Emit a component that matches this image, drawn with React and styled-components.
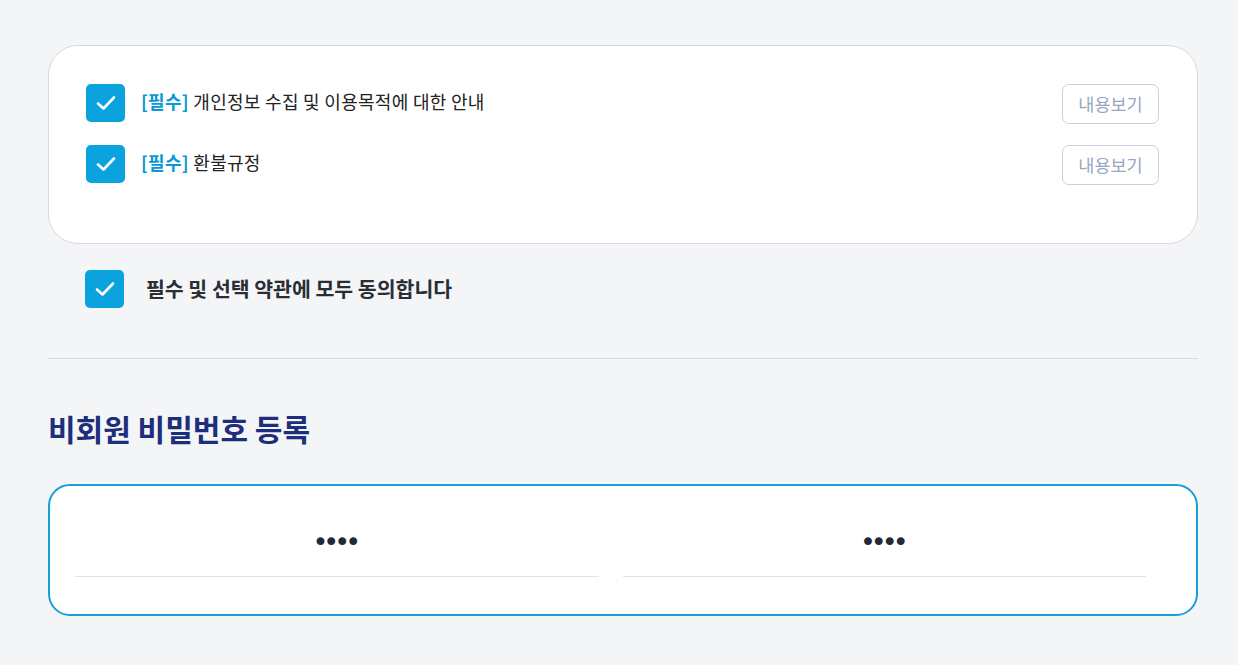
import React from "react";
import styled, { createGlobalStyle } from "styled-components";

const Global = createGlobalStyle`
  html, body { margin: 0; padding: 0; background: #f4f5f7; }
  body { font-family: "Noto Sans CJK KR", "Noto Sans", sans-serif; color: #222; }
`;

const Page = styled.div`
  width: 1150px;
  padding: 45px 40px 50px 48px;
`;

const TermsCard = styled.div`
  background: #fff;
  border: 1px solid #d6d9e6;
  border-radius: 30px;
  padding: 38px 38px 46px 37px;
  display: flex;
  flex-direction: column;
  gap: 23px;
  height: 199px;
  box-sizing: border-box;
`;

const TermRow = styled.div`
  display: flex;
  align-items: center;
  height: 38px;
`;

const Box = styled.span`
  width: 39px;
  height: 38px;
  border-radius: 5px;
  background: #0aa3de;
  display: flex;
  align-items: center;
  justify-content: center;
  flex-shrink: 0;
`;

const Label = styled.span`
  margin-left: ${(p) => p.$gap}px;
  font-size: ${(p) => p.$size}px;
  font-weight: ${(p) => p.$weight};
  color: ${(p) => p.$color};
  letter-spacing: ${(p) => p.$ls || 0}px;
  flex: 1;
  line-height: 1;
  position: relative;
  top: ${(p) => p.$shift || -1}px;
`;

const Req = styled.b`
  color: #0a98d6;
  font-weight: 700;
`;

const ViewButton = styled.button`
  align-self: flex-start;
  width: 97px;
  height: 40px;
  border: 1px solid #c9d0dd;
  border-radius: 7px;
  background: #fff;
  color: #98a6c0;
  font-family: "Noto Sans CJK KR", sans-serif;
  font-size: 17.5px;
  padding: 0 0 2px;
`;

const AgreeRow = styled.div`
  display: flex;
  align-items: center;
  height: 38px;
  margin: 26px 0 0 37px;
`;

const Divider = styled.hr`
  border: none;
  border-top: 1px solid #d8d9de;
  margin: 50px 0 0;
`;

const Heading = styled.h2`
  margin: 49px 0 0;
  font-size: 30px;
  font-weight: 700;
  color: #1c2e7c;
  line-height: 40px;
`;

const InputCard = styled.div`
  margin-top: 36px;
  background: #fff;
  border: 2px solid #17a0d8;
  border-radius: 22px;
  height: 132px;
  box-sizing: border-box;
  padding: 0 50px 0 25px;
  display: grid;
  grid-template-columns: 1fr 1fr;
  gap: 24px;
`;

const Field = styled.div`
  display: flex;
  flex-direction: column;
  align-items: center;
  border-bottom: 1px solid #e1e3e8;
  height: 91px;
  box-sizing: border-box;
  padding-top: 42px;
`;

const Dots = styled.span`
  font-size: 27px;
  line-height: 1;
  color: #222a35;
  letter-spacing: -5px;
  padding-right: 5px;
  font-family: "DejaVu Sans", sans-serif;
`;

const Check = () => (
  <Box>
    <svg width="20" height="16" viewBox="0 0 20 16">
      <path d="M2 8.5 L7.5 13.5 L18 2.5" fill="none" stroke="#fff" strokeWidth="2.6" strokeLinecap="round" strokeLinejoin="round" />
    </svg>
  </Box>
);

export default function App() {
  return (
    <>
      <Global />
      <Page>
        <TermsCard>
          <TermRow>
            <Check />
            <Label $gap={16} $size={18} $ls={0.3} $shift={-2} $weight={400} $color="#222">
              <Req>[필수]</Req> 개인정보 수집 및 이용목적에 대한 안내
            </Label>
            <ViewButton>내용보기</ViewButton>
          </TermRow>
          <TermRow>
            <Check />
            <Label $gap={16} $size={18} $ls={0.3} $shift={-2} $weight={400} $color="#222">
              <Req>[필수]</Req> 환불규정
            </Label>
            <ViewButton>내용보기</ViewButton>
          </TermRow>
        </TermsCard>
        <AgreeRow>
          <Check />
          <Label $gap={22} $size={20.5} $weight={700} $color="#2a2d35">
            필수 및 선택 약관에 모두 동의합니다
          </Label>
        </AgreeRow>
        <Divider />
        <Heading>비회원 비밀번호 등록</Heading>
        <InputCard>
          <Field>
            <Dots>••••</Dots>
          </Field>
          <Field>
            <Dots>••••</Dots>
          </Field>
        </InputCard>
      </Page>
    </>
  );
}
